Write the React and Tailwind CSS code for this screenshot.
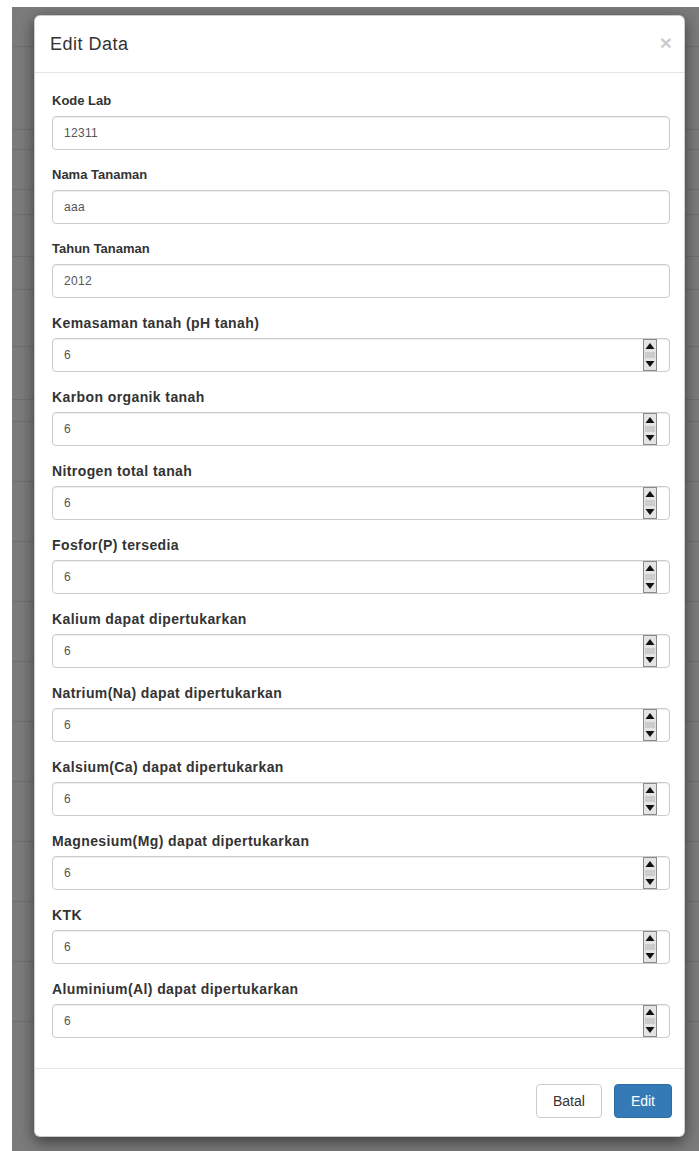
import React from "react";

const fields = [
  { label: "Kode Lab", value: "12311", narrow: true },
  { label: "Nama Tanaman", value: "aaa", narrow: true },
  { label: "Tahun Tanaman", value: "2012", narrow: true },
  { label: "Kemasaman tanah (pH tanah)", value: "6", number: true },
  { label: "Karbon organik tanah", value: "6", number: true },
  { label: "Nitrogen total tanah", value: "6", number: true },
  { label: "Fosfor(P) tersedia", value: "6", number: true },
  { label: "Kalium dapat dipertukarkan", value: "6", number: true },
  { label: "Natrium(Na) dapat dipertukarkan", value: "6", number: true },
  { label: "Kalsium(Ca) dapat dipertukarkan", value: "6", number: true },
  { label: "Magnesium(Mg) dapat dipertukarkan", value: "6", number: true },
  { label: "KTK", value: "6", number: true },
  { label: "Aluminium(Al) dapat dipertukarkan", value: "6", number: true },
];

// Row heights of the table that sits behind the dimmed backdrop
const rows = [40, 83, 20, 40, 25, 42, 33, 57, 53, 22, 60, 60, 60, 60, 60, 60, 60, 60, 60, 60];

function Spinner() {
  return (
    <svg width="14" height="32" viewBox="0 0 14 32" className="block">
      <rect x="0.5" y="0.5" width="13" height="31" fill="#e4e4e4" stroke="#8a8a8a" />
      <polygon points="2.5,10 11.5,10 7,4" fill="#111" />
      <polygon points="2.5,22 11.5,22 7,28" fill="#111" />
      <line x1="2" y1="14" x2="12" y2="14" stroke="#b5b5b5" />
      <line x1="2" y1="16" x2="12" y2="16" stroke="#b5b5b5" />
      <line x1="2" y1="18" x2="12" y2="18" stroke="#b5b5b5" />
    </svg>
  );
}

function Field({ label, value, number, narrow }) {
  return (
    <div className="mb-[15px]">
      <div
        className={
          narrow
            ? "h-[20px] mb-[5px] text-[13px] leading-[20px] font-bold text-[#333] font-['Liberation_Sans_Narrow','Arial_Narrow','Liberation_Sans',sans-serif]"
            : "h-[20px] mb-[5px] text-[14px] leading-[20px] font-bold text-[#333] tracking-[0.4px]"
        }
      >
        {label}
      </div>
      <div className="relative h-[34px] border border-[#ccc] rounded-[4px] bg-white shadow-[inset_0_1px_1px_rgba(0,0,0,0.075)] pl-[11px] pr-[12px] flex items-center text-[12px] text-[#555] tracking-[0.3px]">
        {value}
        {number && (
          <div className="absolute right-[12px] top-[0px]">
            <Spinner />
          </div>
        )}
      </div>
    </div>
  );
}

export default function App() {
  return (
    <div className="w-[699px] h-[1151px] bg-white pt-[7px] pl-[12px] overflow-hidden font-['Liberation_Sans',Arial,sans-serif]">
      <div className="relative h-full bg-[#7b7b7b] overflow-hidden">
        {rows.map((h, i) => (
          <div key={i} style={{ height: h }} className="border-b border-[#6f6f6f]" />
        ))}

        {/* Edit dialog */}
        <div className="absolute left-[22px] top-[8px] w-[651px] bg-white rounded-[6px] border border-[rgba(0,0,0,0.2)] shadow-[0_5px_15px_rgba(0,0,0,0.5)]">
          <div className="flex items-center justify-between px-[15px] pt-[15px] pb-[15px] border-b border-[#e5e5e5]">
            <div className="text-[18px] leading-[26px] text-[#333] tracking-[0.5px]">Edit Data</div>
            <div className="text-[21px] leading-[21px] font-bold text-black opacity-20 -mt-[4px] -mr-[3px]">×</div>
          </div>
          <div className="pl-[17px] pr-[14px] pt-[18px] pb-[15px]">
            {fields.map((f) => (
              <Field key={f.label} {...f} />
            ))}
          </div>
          <div className="flex justify-end items-center border-t border-[#e5e5e5] pt-[15px] pb-[18px] pr-[12px]">
            <div className="h-[34px] px-[16px] flex items-center border border-[#ccc] rounded-[4px] bg-white text-[14px] text-[#333]">
              Batal
            </div>
            <div className="ml-[12px] h-[34px] px-[16px] flex items-center border border-[#2e6da4] rounded-[4px] bg-[#337ab7] text-[14px] text-white">
              Edit
            </div>
          </div>
        </div>
      </div>
    </div>
  );
}
